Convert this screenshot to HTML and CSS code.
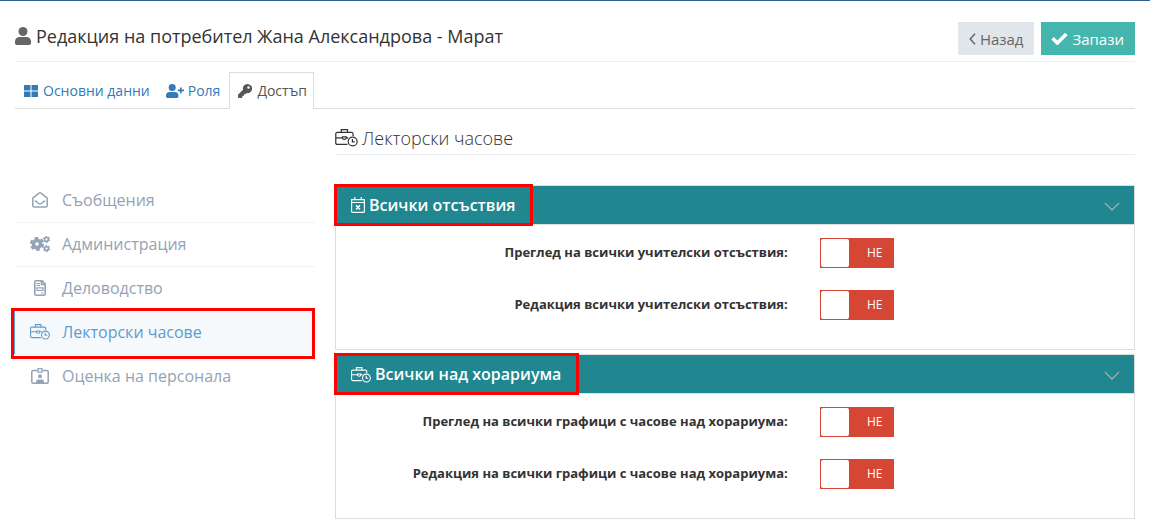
FILE: index.html
```html
<!DOCTYPE html>
<html lang="bg">
<head>
<meta charset="utf-8">
<meta name="viewport" content="width=device-width, initial-scale=1">
<title>Редакция на потребител</title>
<link rel="stylesheet" href="styles.css">
</head>
<body>
<svg class="sprite" aria-hidden="true">
  <symbol id="case-clock" viewBox="0 0 24 20">
    <g fill="none" stroke="currentColor" stroke-width="1.3">
      <path d="M13 17.300H2.200a1.500 1.500 0 0 1-1.500-1.500V6.200a1.500 1.500 0 0 1 1.500-1.500h15.200a1.500 1.500 0 0 1 1.500 1.500v2.300M6.500 4.700v-3h6.600v3M.7 10.300h7.100m4 0h2.200M7.800 9.300h4v1.200c0 .9-.7 1.500-2 1.500s-2-.6-2-1.500z"/>
      <circle cx="18.500" cy="14.200" r="4.700"/>
      <path d="M18.200 11.500v3h2.500"/>
    </g>
  </symbol>
</svg>
<div class="page">
  <header class="header">
    <h1 class="header__title">
      <svg class="icon-user" viewBox="0 0 16 18" fill="currentColor" aria-hidden="true"><circle cx="8" cy="4.500" r="4.500"/><path d="M4.500 10h7A4.500 4.500 0 0 1 16 14.500v1.700A1.800 1.800 0 0 1 14.200 18H1.800A1.800 1.800 0 0 1 0 16.200v-1.700A4.500 4.500 0 0 1 4.500 10z"/></svg>
      Редакция на потребител Жана Александрова - Марат
    </h1>
    <div class="header__actions">
      <button type="button" class="btn btn--back"><svg class="icon-back" viewBox="0 0 7 12" aria-hidden="true"><path d="M6 .8 1.200 6 6 11.200" fill="none" stroke="currentColor" stroke-width="1.500"/></svg>Назад</button>
      <button type="button" class="btn btn--save"><svg class="icon-check" viewBox="0 0 16 12" aria-hidden="true"><path d="M1.500 5.800 6 10.200 14.500 1.700" fill="none" stroke="currentColor" stroke-width="3.400"/></svg>Запази</button>
    </div>
  </header>

  <nav class="tabs">
    <a class="tab" href="#main"><svg class="icon-grid" viewBox="0 0 14 12" fill="currentColor" aria-hidden="true"><rect width="6.500" height="5.500" rx=".5"/><rect x="7.500" width="6.500" height="5.500" rx=".5"/><rect y="6.500" width="6.500" height="5.500" rx=".5"/><rect x="7.500" y="6.500" width="6.500" height="5.500" rx=".5"/></svg>Основни данни</a>
    <a class="tab tab--role" href="#role"><svg class="icon-user-plus" viewBox="0 0 18 14" fill="currentColor" aria-hidden="true"><circle cx="6.200" cy="3.500" r="3.500"/><path d="M3.600 8h5.200a3.600 3.600 0 0 1 3.600 3.600v1A1.400 1.400 0 0 1 11 14H1.400A1.400 1.400 0 0 1 0 12.600v-1A3.600 3.600 0 0 1 3.600 8zM14 3.500h1.700v2H18v1.700h-2.300v2H14v-2h-2.200V5.500H14z"/></svg>Роля</a>
    <a class="tab tab--active" href="#access" aria-current="page"><svg class="icon-key" viewBox="0 0 14 14" aria-hidden="true"><path fill="currentColor" fill-rule="evenodd" d="M9.400 0a4.600 4.600 0 1 1-.9 9.100L7.400 10.300H6v1.500H4.400v1.500L3.700 14H.6L0 13.300v-2.600l5-5A4.600 4.600 0 0 1 9.400 0zm1.100 2.200a1.300 1.300 0 1 0 0 2.600 1.300 1.300 0 0 0 0-2.600z"/></svg>Достъп</a>
  </nav>

  <div class="layout">
    <nav class="menu">
      <a class="menu__item" href="#messages"><span class="menu__icon"><svg class="menu-mail" viewBox="0 0 16 16" fill="none" stroke="currentColor" stroke-width="1.500" aria-hidden="true"><path d="M.8 6.200 7 1.200q1-.8 2 0l6.200 5v7.600a1.300 1.300 0 0 1-1.300 1.300H2.100a1.300 1.300 0 0 1-1.300-1.300zM3 8.700l3.800 2.800q1.200.8 2.400 0L13 8.700"/></svg></span>Съобщения</a>
      <a class="menu__item" href="#admin"><span class="menu__icon"><svg class="menu-gears" viewBox="0 0 20 16" fill="none" stroke="currentColor" aria-hidden="true"><circle cx="7" cy="8" r="3.600" stroke-width="3.600"/><circle cx="7" cy="8" r="6" stroke-width="2.200" stroke-dasharray="3.600 2.683"/><circle cx="16.500" cy="3.400" r="1.900" stroke-width="1.500"/><circle cx="16.500" cy="3.400" r="2.900" stroke-width="1.200" stroke-dasharray="1.800 1.237"/><circle cx="16.500" cy="12.600" r="1.900" stroke-width="1.500"/><circle cx="16.500" cy="12.600" r="2.900" stroke-width="1.200" stroke-dasharray="1.800 1.237"/></svg></span>Администрация</a>
      <a class="menu__item" href="#office"><span class="menu__icon"><svg class="menu-doc" viewBox="0 0 12 16" fill="none" stroke="currentColor" stroke-width="1.600" aria-hidden="true"><path d="M.8 2a1.200 1.200 0 0 1 1.200-1.200h6L11.200 4v10a1.200 1.200 0 0 1-1.200 1.200H2A1.200 1.200 0 0 1 .8 14zM7.500.7v3.800h3.800"/><path d="M2.500 3.500H6M2.500 5.500H6M7 13h2.500" stroke-width="1"/><path d="M3 7.900h6v2.600H3z" stroke-width="1.200"/></svg></span>Деловодство</a>
      <a class="menu__item menu__item--active" href="#hours" aria-current="page"><span class="menu__icon"><svg class="menu-case" aria-hidden="true"><use href="#case-clock"/></svg></span>Лекторски часове<span class="mark mark--menu"></span></a>
      <a class="menu__item" href="#rating"><span class="menu__icon"><svg class="menu-badge" viewBox="0 0 18 16" fill="none" stroke="currentColor" stroke-width="1.500" aria-hidden="true"><path d="M6.500 2.500H2A1.200 1.200 0 0 0 .8 3.700v10.300a1.200 1.200 0 0 0 1.200 1.200h14a1.200 1.200 0 0 0 1.200-1.200V3.700A1.200 1.200 0 0 0 16 2.500h-4.500"/><path d="M7 .7h4v3.500H7z" stroke-width="1.300"/><path d="M9 6.300a2 2 0 1 1 0 4 2 2 0 0 1 0-4zM5 15v-1.200q0-2.200 2.200-2.200h3.600q2.200 0 2.200 2.200V15z" fill="currentColor" stroke="none"/></svg></span>Оценка на персонала</a>
    </nav>

    <main class="content">
      <h2 class="content__title"><svg class="icon-case-lg" aria-hidden="true"><use href="#case-clock"/></svg>Лекторски часове</h2>

      <section class="panel">
        <header class="panel__head">
          <h3 class="panel__title"><svg class="icon-cal" viewBox="0 0 14 16" fill="none" stroke="currentColor" aria-hidden="true"><path d="M.6 2.600h12.800v11.800a1 1 0 0 1-1 1H1.600a1 1 0 0 1-1-1zM.6 5.500h12.800M3.800 0v2.600M10.200 0v2.600" stroke-width="1.200"/><path d="m5 8.300 4 4.200m0-4.200-4 4.200" stroke-width="1.500"/></svg>Всички отсъствия<span class="mark mark--title"></span></h3>
          <button type="button" class="panel__toggle" aria-label="Свиване"><svg class="icon-down" viewBox="0 0 16 9" aria-hidden="true"><path d="m1 1 7 7 7-7" fill="none" stroke="currentColor" stroke-width="1.300"/></svg></button>
        </header>
        <div class="panel__body">
          <div class="field"><label class="field__label" for="abs-view">Преглед на всички учителски отсъствия:</label><span class="switch"><input class="switch__input" type="checkbox" role="switch" id="abs-view"><span class="switch__text">НЕ</span></span></div>
          <div class="field"><label class="field__label" for="abs-edit">Редакция всички учителски отсъствия:</label><span class="switch"><input class="switch__input" type="checkbox" role="switch" id="abs-edit"><span class="switch__text">НЕ</span></span></div>
        </div>
      </section>

      <section class="panel">
        <header class="panel__head">
          <h3 class="panel__title"><svg class="icon-case" aria-hidden="true"><use href="#case-clock"/></svg>Всички над хорариума<span class="mark mark--title"></span></h3>
          <button type="button" class="panel__toggle" aria-label="Свиване"><svg class="icon-down" viewBox="0 0 16 9" aria-hidden="true"><path d="m1 1 7 7 7-7" fill="none" stroke="currentColor" stroke-width="1.300"/></svg></button>
        </header>
        <div class="panel__body">
          <div class="field"><label class="field__label" for="over-view">Преглед на всички графици с часове над хорариума:</label><span class="switch"><input class="switch__input" type="checkbox" role="switch" id="over-view"><span class="switch__text">НЕ</span></span></div>
          <div class="field"><label class="field__label" for="over-edit">Редакция на всички графици с часове над хорариума:</label><span class="switch"><input class="switch__input" type="checkbox" role="switch" id="over-edit"><span class="switch__text">НЕ</span></span></div>
        </div>
      </section>
    </main>
  </div>
</div>
</body>
</html>
```
FILE: styles.css
```css
* { box-sizing: border-box; }
body {
  margin: 0;
  background: #fff;
  color: #333;
  font-family: "Open Sans", "Noto Sans", sans-serif;
  font-size: 14px;
  line-height: 20px;
}
h1, h2, h3 { margin: 0; }
a { text-decoration: none; }
svg { display: block; flex: none; }
.sprite { position: absolute; width: 0; height: 0; }

.page { border-top: 1px solid #2f5f94; padding: 0 15px 9px; }

.header {
  display: flex;
  justify-content: space-between;
  align-items: flex-start;
  padding: 21px 0 6px;
  border-bottom: 1px solid #eee;
}
.header__title {
  display: flex;
  align-items: center;
  gap: 5px;
  font-size: 18px;
  font-weight: 400;
  line-height: 28px;
}
.icon-user { width: 16px; height: 18px; color: #666; }
.header__actions { display: flex; gap: 7px; }
.btn {
  display: flex;
  align-items: center;
  gap: 4px;
  height: 33px;
  padding: 0 11px;
  border: 0;
  font: 400 15px/20px "Open Sans", "Noto Sans", sans-serif;
}
.btn--back { background: #e1e5ec; color: #666; }
.btn--save { background: #44b6ae; color: #fff; padding-left: 10px; }
.icon-back { width: 7px; height: 12px; }
.icon-check { width: 17px; height: 13px; }

.tabs {
  display: flex;
  margin-top: 10px;
  border-bottom: 1px solid #ddd;
}
.tab {
  display: flex;
  align-items: center;
  gap: 5px;
  height: 37px;
  margin-bottom: -1px;
  padding: 0 6px 0 8px;
  border: 1px solid transparent;
  border-bottom: 0;
  color: #337ab7;
}
.tab--role { gap: 4px; padding-right: 8px; }
.tab--active { border-color: #ddd; background: #fff; color: #555; }
.icon-grid { width: 14px; height: 12px; }
.icon-user-plus { width: 18px; height: 14px; }
.icon-key { width: 14px; height: 14px; }

.layout {
  display: grid;
  grid-template-columns: 3fr 8fr;
  gap: 20px;
}
.menu { padding-top: 70px; }
.menu__item {
  position: relative;
  display: flex;
  align-items: center;
  gap: 11px;
  height: 44px;
  padding: 0 0 2px 14px;
  border-bottom: 1px solid #f0f4f7;
  color: #93a3b5;
  font-size: 16px;
}
.menu__item:last-child { border-bottom: 0; }
.menu__item--active {
  margin-left: -2px;
  border-left: 2px solid #5b9bd1;
  background: #f6f9fb;
  color: #5b9bd1;
}
.menu__icon { display: flex; justify-content: center; width: 22px; }
.menu-mail { width: 16px; height: 16px; }
.menu-gears { width: 20px; height: 16px; }
.menu-doc { width: 12px; height: 16px; }
.menu-case { width: 20px; height: 17px; }
.menu-badge { width: 18px; height: 16px; }

.mark { position: absolute; border: 3px solid #f00; pointer-events: none; }
.mark--menu { inset: -3px 0 -5px -4px; }
.mark--title { inset: -2px -18px -2px -17px; }

.content__title {
  display: flex;
  align-items: center;
  gap: 4px;
  height: 46px;
  margin-bottom: 30px;
  padding-top: 12px;
  border-bottom: 1px solid #e7ecf1;
  font-size: 18px;
  font-weight: 300;
}
.icon-case-lg { width: 23px; height: 19px; }

.panel { border: 1px solid #ddd; margin-bottom: 4px; }
.panel:last-child { margin-bottom: 0; }
.panel__head {
  display: flex;
  justify-content: space-between;
  align-items: center;
  height: 39px;
  padding: 0 14px 0 15px;
  border-bottom: 1px solid #ddd;
  background: #20868f;
  color: #fff;
}
.panel__title {
  position: relative;
  display: flex;
  align-items: center;
  gap: 4px;
  height: 38px;
  font-size: 16px;
  font-weight: 600;
}
.icon-cal { width: 14px; height: 16px; }
.icon-case { width: 20px; height: 17px; }
.panel__toggle { padding: 3px 0 0; border: 0; background: none; color: #aaa; }
.icon-down { width: 16px; height: 9px; }
.panel__body {
  display: grid;
  gap: 22px;
  padding: 13px 0 29px;
}
.field {
  display: grid;
  grid-template-columns: 23fr 16fr;
  gap: 32px;
  align-items: center;
}
.field__label { padding-bottom: 2px; font-size: 13px; font-weight: 700; text-align: right; }
.switch { display: grid; width: 74px; height: 30px; }
.switch__input {
  grid-area: 1 / 1;
  appearance: none;
  width: 74px;
  height: 30px;
  margin: 0;
  padding: 1px;
  background: #d64635;
}
.switch__input::before {
  content: "";
  display: block;
  width: 28px;
  height: 28px;
  border-radius: 2px;
  background: #fff;
}
.switch__text {
  grid-area: 1 / 1;
  align-self: center;
  padding-left: 36px;
  color: #fff;
  font-size: 12px;
  text-align: center;
  pointer-events: none;
}
```
